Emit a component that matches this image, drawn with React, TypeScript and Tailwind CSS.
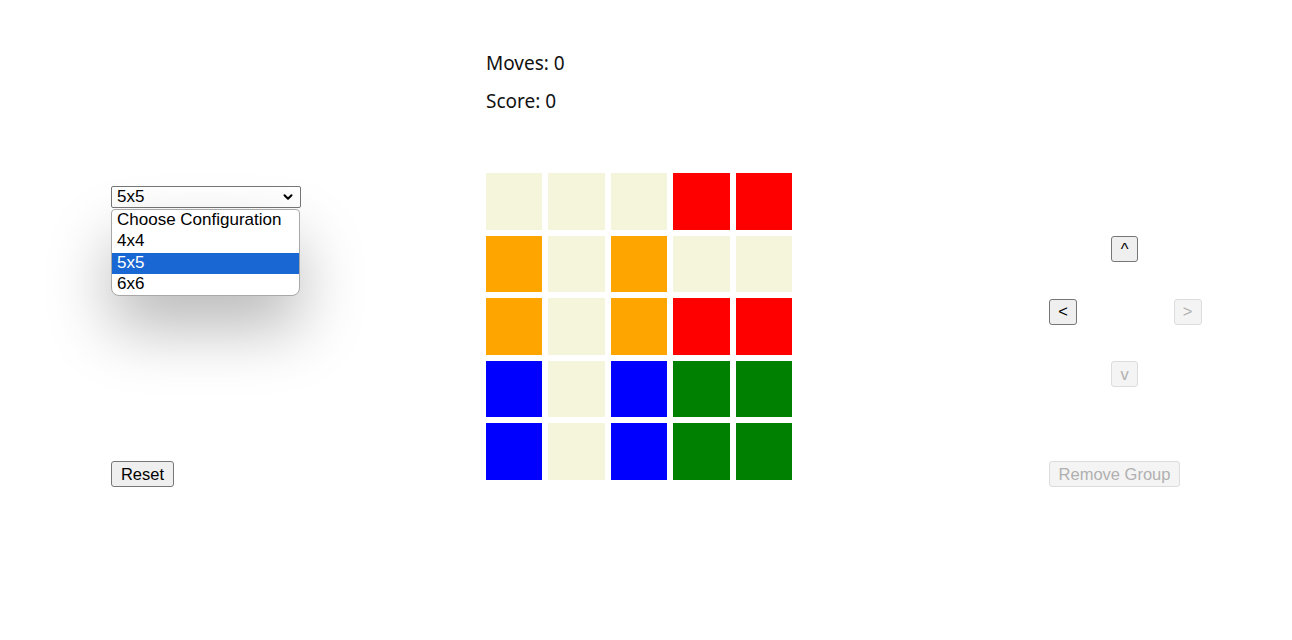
import clsx from 'clsx';
import { ChevronDown } from 'lucide-react';

const B = '#f5f5dc';
const R = '#ff0000';
const O = '#ffa500';
const U = '#0000ff';
const G = '#008000';

const board = [
  [B, B, B, R, R],
  [O, B, O, B, B],
  [O, B, O, R, R],
  [U, B, U, G, G],
  [U, B, U, G, G],
];

const options = ['Choose Configuration', '4x4', '5x5', '6x6'];

function Btn({ children, disabled, className }: { children: string; disabled?: boolean; className?: string }) {
  return (
    <button
      type="button"
      disabled={disabled}
      className={clsx(
        'flex h-[26px] items-center justify-center whitespace-nowrap rounded-[3px] border px-0 text-[16.5px] leading-none font-["Liberation_Sans",Arial,sans-serif]',
        disabled
          ? 'border-[#dcdcdc] bg-[#f4f4f4] text-[#b0b0b0]'
          : 'border-[#767676] bg-[#efefef] text-black',
        className
      )}
    >
      {children}
    </button>
  );
}

export default function App() {
  return (
    <div className="flex h-[640px] w-full bg-white text-black">
      {/* left column */}
      <div className="ml-[111px] flex w-[372px] flex-col pt-[186px]">
        <div className="relative w-[190px]">
          <div className="flex h-[22px] items-center justify-between rounded-[2px] border border-[#767676] bg-white pl-[5px] pr-[5px] text-[17px] font-['Liberation_Sans',Arial,sans-serif]">
            <span>5x5</span>
            <ChevronDown className="h-[14px] w-[14px]" strokeWidth={3.5} />
          </div>
          <ul className="absolute left-0 top-[23px] z-10 w-[189px] overflow-hidden rounded-b-[8px] rounded-t-[4px] border border-[#a8a8a8] bg-white shadow-[0_32px_64px_rgba(0,0,0,0.28)] text-[17px] font-['Liberation_Sans',Arial,sans-serif]">
            {options.map((o) => (
              <li
                key={o}
                className={clsx(
                  'h-[21.25px] pl-[5px] leading-[20px]',
                  o === '5x5' ? 'bg-[#1967d2] text-white' : 'text-black'
                )}
              >
                {o}
              </li>
            ))}
          </ul>
        </div>
        <div className="mt-[253px]">
          <Btn className="w-[63px]">Reset</Btn>
        </div>
      </div>

      {/* center column */}
      <div className="flex w-[312px] flex-col pt-[51px] font-['Segoe_UI','Noto_Sans',sans-serif] text-[19px] text-[#111]">
        <p className="ml-[3px] h-[24px] leading-[24px]">Moves: 0</p>
        <p className="ml-[3px] mt-[14px] h-[24px] leading-[24px]">Score: 0</p>
        <div className="mt-[57px] grid w-[312px] grid-cols-5">
          {board.flat().map((c, i) => (
            <div key={i} className="h-[62.5px] p-[3px]">
              <div className="h-full w-full" style={{ backgroundColor: c }} />
            </div>
          ))}
        </div>
      </div>

      {/* right column */}
      <div className="ml-[254px] flex flex-col pt-[236px]">
        <div className="grid grid-cols-[62px_62.5px_62.5px] auto-rows-[62.5px]">
          <div />
          <Btn className="w-[27px]">^</Btn>
          <div />
          <Btn className="w-[28px]">&lt;</Btn>
          <div />
          <Btn disabled className="w-[28px]">&gt;</Btn>
          <div />
          <Btn disabled className="w-[27px]">v</Btn>
          <div />
        </div>
        <div className="mt-[37.5px]">
          <Btn disabled className="w-[131px]">Remove Group</Btn>
        </div>
      </div>
    </div>
  );
}
